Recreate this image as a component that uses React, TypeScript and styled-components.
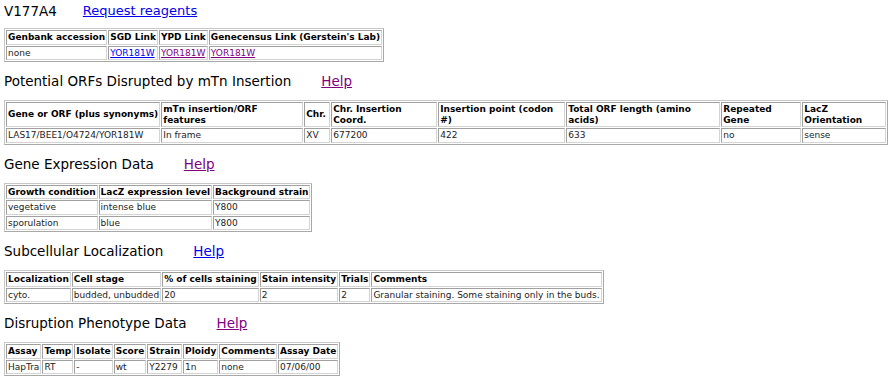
import styled, { createGlobalStyle } from 'styled-components'

const GlobalStyle = createGlobalStyle`
  body {
    margin: 0;
    padding: 0 4px;
    background: #ffffff;
    color: #000000;
    font-family: 'DejaVu Sans', Verdana, sans-serif;
  }
`

interface LinkProps {
  $visited?: boolean
}

interface CellProps {
  $w?: number
  $nowrap?: boolean
}

type Cell = string | { text: string; visited?: boolean }

interface HeadCell {
  text: string
  w?: number
  nowrap?: boolean
}

interface SectionData {
  title: string
  helpVisited: boolean
  full?: boolean
  head: HeadCell[]
  rows: Cell[][]
}

const sections: SectionData[] = [
  {
    title: 'Potential ORFs Disrupted by mTn Insertion',
    helpVisited: true,
    full: true,
    head: [
      { text: 'Gene or ORF (plus synonyms)', w: 150, nowrap: true },
      { text: 'mTn insertion/ORF features', w: 138 },
      { text: 'Chr.', w: 22 },
      { text: 'Chr. Insertion Coord.', w: 102 },
      { text: 'Insertion point (codon #)', w: 123 },
      { text: 'Total ORF length (amino acids)', w: 150 },
      { text: 'Repeated Gene', w: 76 },
      { text: 'LacZ Orientation' }
    ],
    rows: [['LAS17/BEE1/O4724/YOR181W', 'In frame', 'XV', '677200', '422', '633', 'no', 'sense']]
  },
  {
    title: 'Gene Expression Data',
    helpVisited: true,
    head: [{ text: 'Growth condition' }, { text: 'LacZ expression level' }, { text: 'Background strain' }],
    rows: [
      ['vegetative', 'intense blue', 'Y800'],
      ['sporulation', 'blue', 'Y800']
    ]
  },
  {
    title: 'Subcellular Localization',
    helpVisited: false,
    head: [
      { text: 'Localization' },
      { text: 'Cell stage' },
      { text: '% of cells staining' },
      { text: 'Stain intensity' },
      { text: 'Trials' },
      { text: 'Comments' }
    ],
    rows: [['cyto.', 'budded, unbudded', '20', '2', '2', 'Granular staining. Some staining only in the buds.']]
  },
  {
    title: 'Disruption Phenotype Data',
    helpVisited: true,
    head: [
      { text: 'Assay' },
      { text: 'Temp' },
      { text: 'Isolate' },
      { text: 'Score' },
      { text: 'Strain' },
      { text: 'Ploidy' },
      { text: 'Comments' },
      { text: 'Assay Date' }
    ],
    rows: [['HapTra', 'RT', '-', 'wt', 'Y2279', '1n', 'none', '07/06/00']]
  }
]

function DataTable({ head, rows, full }: { head: HeadCell[]; rows: Cell[][]; full?: boolean }) {
  return (
    <Table $full={full}>
      <tbody>
        <tr>
          {head.map((h, i) => (
            <Th key={i} $w={h.w} $nowrap={h.nowrap}>
              {h.text}
            </Th>
          ))}
        </tr>
        {rows.map((row, r) => (
          <tr key={r}>
            {row.map((c, i) => (
              <Td key={i}>
                {typeof c === 'string' ? (
                  c
                ) : (
                  <CellLink href="#" $visited={c.visited}>
                    {c.text}
                  </CellLink>
                )}
              </Td>
            ))}
          </tr>
        ))}
      </tbody>
    </Table>
  )
}

export default function App() {
  return (
    <Page>
      <GlobalStyle />
      <TitleRow>
        <Title>V177A4</Title>
        <BigLink href="#">Request reagents</BigLink>
      </TitleRow>
      <DataTable
        head={[{ text: 'Genbank accession' }, { text: 'SGD Link' }, { text: 'YPD Link' }, { text: "Genecensus Link (Gerstein's Lab)" }]}
        rows={[['none', { text: 'YOR181W' }, { text: 'YOR181W', visited: true }, { text: 'YOR181W', visited: true }]]}
      />
      {sections.map(s => (
        <div key={s.title}>
          <SectionHeader>
            <Title>{s.title}</Title>
            <HelpLink href="#" $visited={s.helpVisited}>
              Help
            </HelpLink>
          </SectionHeader>
          <DataTable head={s.head} rows={s.rows} full={s.full} />
        </div>
      ))}
    </Page>
  )
}

const Page = styled.div`
  display: flex;
  flex-direction: column;
`

const TitleRow = styled.div`
  display: flex;
  align-items: center;
  height: 18px;
  margin: 2px 0 8px;
`

const SectionHeader = styled.div`
  display: flex;
  align-items: center;
  height: 18px;
  margin: 10px 0 10px;
`

const Title = styled.span`
  font-size: 13.5px;
  line-height: 18px;
  color: #000;
`

const BigLink = styled.a`
  margin-left: 26px;
  font-size: 13px;
  line-height: 18px;
  color: #0000ee;
`

const HelpLink = styled.a<LinkProps>`
  margin-left: 30px;
  font-size: 13.5px;
  line-height: 18px;
  color: ${({ $visited }) => ($visited ? '#800080' : '#0000ee')};
`

const Table = styled.table<{ $full?: boolean }>`
  width: ${({ $full }) => ($full ? '100%' : 'auto')};
  align-self: flex-start;
  border-collapse: separate;
  border-spacing: 1px;
  border: 1px solid #c8c8c8;
  border-right-color: #a8a8a8;
  border-bottom-color: #a8a8a8;
  font-size: 9px;
`

const Th = styled.th<CellProps>`
  ${({ $w }) => ($w ? `width: ${$w}px;` : '')}
  white-space: ${({ $nowrap }) => ($nowrap ? 'nowrap' : 'normal')};
  padding: 1px 1px;
  text-align: left;
  vertical-align: middle;
  font-weight: bold;
  line-height: 10.5px;
  border: 1px solid #a0a0a0;
  border-right-color: #d4d4d4;
  border-bottom-color: #d4d4d4;
`

const Td = styled.td`
  padding: 1px 1px;
  text-align: left;
  line-height: 10.5px;
  white-space: nowrap;
  border: 1px solid #a0a0a0;
  border-right-color: #d4d4d4;
  border-bottom-color: #d4d4d4;
  color: #222;
`

const CellLink = styled.a<LinkProps>`
  color: ${({ $visited }) => ($visited ? '#800080' : '#0000ee')};
`
